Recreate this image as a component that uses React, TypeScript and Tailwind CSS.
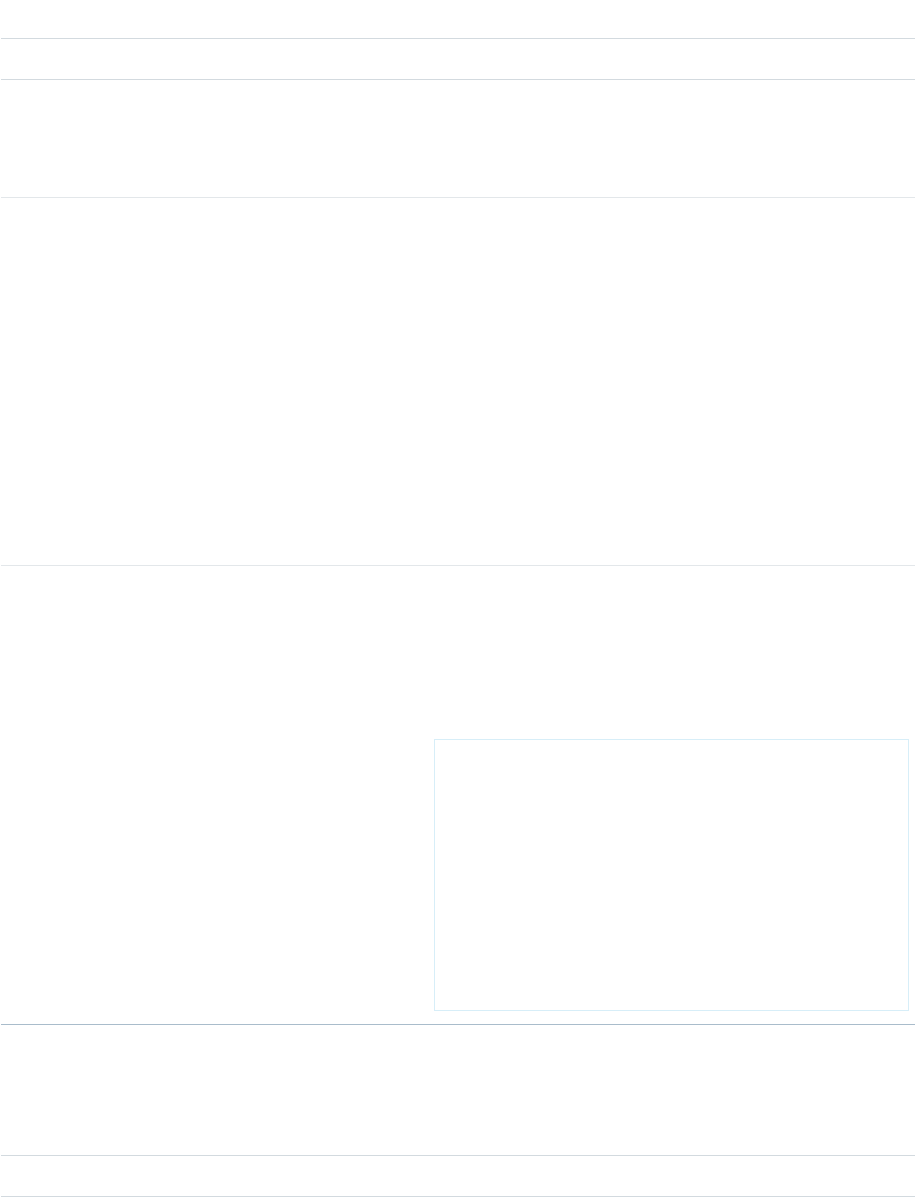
import React from 'react';

const App: React.FC = () => {
  return (
    <div className="w-[916px] h-[1198px] bg-white font-['Liberation_Sans',sans-serif] overflow-hidden">
      <div className="px-px">
        {/* top bar */}
        <div className="h-[39px] border-b border-[#d3dadf]" />
        <div className="h-[41px] border-b border-[#d3dadf]" />
        {/* header section */}
        <div className="h-[118px] border-b border-[#e3e7ea]" />
        {/* main content */}
        <div className="h-[368px] border-b border-[#e3e7ea]" />
        {/* detail with panel */}
        <div className="h-[459px] border-b border-[#a9bccb] flex justify-end pt-[173px] pr-[6px]">
          <div className="w-[475px] h-[272px] border border-[#d7eef8] bg-white" />
        </div>
        <div className="h-[131px] border-b border-[#d3dadf]" />
        <div className="h-[41px] border-b border-[#d3dadf]" />
      </div>
    </div>
  );
};

export default App;
